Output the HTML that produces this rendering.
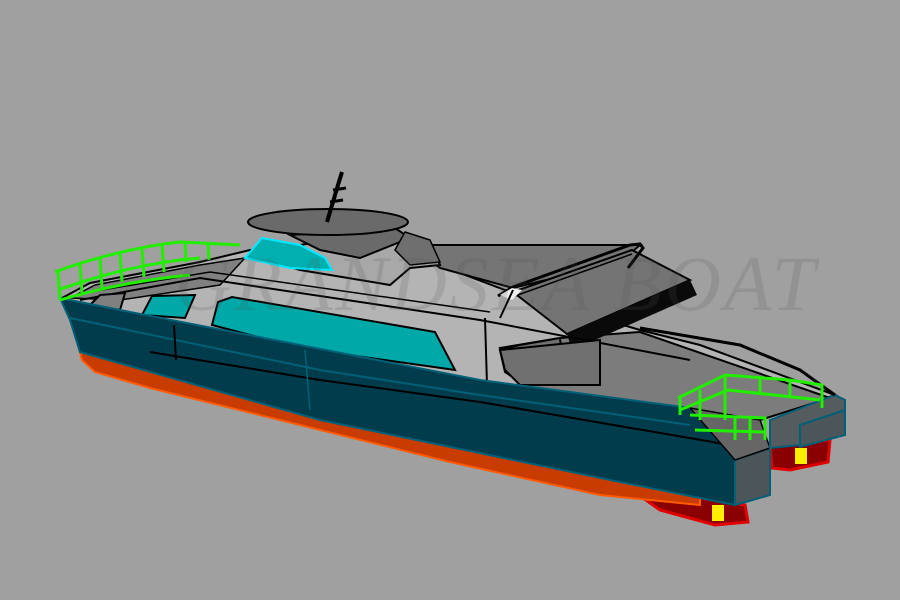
<!DOCTYPE html>
<html><head><style>
html,body{margin:0;padding:0;background:#a0a0a0;width:900px;height:600px;overflow:hidden}
svg{display:block}
</style></head><body>
<svg width="900" height="600" viewBox="0 0 900 600" xmlns="http://www.w3.org/2000/svg">
<rect width="900" height="600" fill="#a0a0a0"/>
<polygon points="615,478 700,498 745,505 748,522 715,525 660,510" fill="#8a0000" stroke="#e00000" stroke-width="3"/>
<polygon points="770,445 830,440 828,462 790,470 772,468" fill="#8a0000" stroke="#e00000" stroke-width="3"/>
<polygon points="78,345 120,360 320,418 620,482 700,498 700,505 600,495 450,462 300,425 150,388 95,372 82,360" fill="#c83c00" stroke="#ff5a00" stroke-width="2"/>
<polygon points="62,298 90,283 200,262 250,250 420,258 505,290 640,330 700,345 835,395 760,420 690,408 480,383 300,350 62,300" fill="#b4b4b4" stroke="#000" stroke-width="2"/>
<polygon points="70,298 95,285 200,265 245,258 220,285 120,300" fill="#808080" stroke="#000" stroke-width="1.5"/>
<polygon points="500,348 560,338 640,332 830,398 760,420 690,410 600,400 520,385" fill="#7c7c7c" stroke="#000" stroke-width="2"/>
<polygon points="500,350 520,345 560,338 565,385 520,382 505,372" fill="#707070" stroke="#000" stroke-width="2"/>
<polygon points="410,245 640,245 620,262 513,288 440,268" fill="#757575" stroke="#000" stroke-width="2"/>
<polygon points="260,258 300,245 380,232 430,245 440,265 410,268 390,285 330,275 300,270" fill="#a8a8a8" stroke="#000" stroke-width="2"/>
<polygon points="290,235 395,228 410,238 360,258 320,250" fill="#6a6a6a" stroke="#000" stroke-width="2"/>
<polygon points="405,232 430,240 440,262 410,265 395,250" fill="#6f6f6f" stroke="#000" stroke-width="1.5"/>
<ellipse cx="328" cy="222" rx="80" ry="13" fill="#6a6a6a" stroke="#000" stroke-width="2"/>
<polyline points="327,222 338,185 342,172" stroke="#000" stroke-width="4" fill="none"/>
<line x1="333" y1="190" x2="346" y2="188" stroke="#000" stroke-width="3"/>
<line x1="330" y1="202" x2="343" y2="200" stroke="#000" stroke-width="3"/>
<polygon points="245,258 262,238 300,245 325,258 332,270 290,268" fill="#00b0b0" stroke="#00e8ff" stroke-width="2"/>
<!-- sunshade -->
<polygon points="513,292 632,250 690,280 567,334" fill="#747474" stroke="#000" stroke-width="2"/>
<polygon points="567,334 690,280 697,295 572,350" fill="#0a0a0a"/>
<polyline points="498,296 513,287 630,245 640,244 643,248 628,268" stroke="#000" stroke-width="3" fill="none"/>
<polyline points="515,296 632,254" stroke="#000" stroke-width="1.5" fill="none"/>
<polygon points="500,295 512,288 522,290 512,300" fill="#eeeeee"/>
<line x1="513" y1="290" x2="500" y2="318" stroke="#000" stroke-width="2"/>
<polyline points="80,300 200,278 480,320 690,360" stroke="#000" stroke-width="2" fill="none"/>
<polyline points="90,292 210,272 490,312" stroke="#000" stroke-width="1.5" fill="none"/>
<line x1="485" y1="318" x2="487" y2="385" stroke="#000" stroke-width="2"/>
<polygon points="212,325 218,302 232,297 435,332 455,370 300,348" fill="#00a8a8" stroke="#000" stroke-width="2"/>
<polygon points="142,315 152,296 195,295 185,318" fill="#00a8a8" stroke="#000" stroke-width="2"/>
<polygon points="90,305 100,295 125,293 120,310" fill="#808080" stroke="#000" stroke-width="2"/>
<polygon points="500,350 600,340 600,385 520,385 505,370" fill="#707070" stroke="#000" stroke-width="2"/>
<polygon points="60,298 120,310 300,345 480,380 690,408 735,460 735,505 620,482 320,420 80,352 70,320" fill="#003c4c" stroke="#006078" stroke-width="2"/>
<polyline points="70,318 320,370 480,395 690,425" stroke="#006078" stroke-width="2" fill="none"/>
<polyline points="150,352 320,380 480,402 730,445" stroke="#000" stroke-width="2" fill="none"/>
<line x1="174" y1="325" x2="176" y2="360" stroke="#000" stroke-width="2"/>
<line x1="305" y1="350" x2="310" y2="410" stroke="#006078" stroke-width="1.5"/>
<polygon points="735,460 770,448 770,495 735,505" fill="#4c5559" stroke="#006078" stroke-width="2"/>
<polygon points="690,408 760,420 770,448 735,460" fill="#666" stroke="#000" stroke-width="1.5"/>
<polygon points="770,420 835,395 845,400 845,420 800,445 770,448" fill="#555c60" stroke="#006078" stroke-width="2"/>
<polygon points="800,425 845,410 845,435 800,447" fill="#4c5559" stroke="#006078" stroke-width="2"/>
<polyline points="640,328 740,345 800,370 835,395" stroke="#000" stroke-width="3" fill="none"/>
<g stroke="#22ee00" stroke-width="3" fill="none">
<path d="M55,272 C100,255 150,245 180,242 L240,245"/>
<path d="M58,290 C100,275 150,262 200,258"/>
<path d="M60,300 C100,288 140,280 190,275"/>
<line x1="58" y1="272" x2="60" y2="300"/><line x1="80" y1="264" x2="82" y2="293"/><line x1="100" y1="258" x2="102" y2="288"/>
<line x1="120" y1="252" x2="122" y2="282"/><line x1="142" y1="248" x2="144" y2="277"/><line x1="162" y1="244" x2="164" y2="272"/>
<line x1="185" y1="242" x2="186" y2="262"/><line x1="208" y1="242" x2="209" y2="260"/>
<path d="M678,398 L725,375 L790,380 L822,385 L822,408"/>
<path d="M680,410 L728,390 L820,400"/>
<path d="M690,415 L765,418 L765,440"/>
<path d="M695,430 L765,432"/>
<path d="M680,398 L680,415"/><line x1="700" y1="390" x2="700" y2="420"/><line x1="725" y1="375" x2="725" y2="420"/>
<line x1="760" y1="378" x2="760" y2="395"/><line x1="790" y1="380" x2="790" y2="398"/>
<line x1="735" y1="418" x2="735" y2="440"/><line x1="750" y1="418" x2="750" y2="440"/>
</g>
<rect x="712" y="505" width="12" height="16" fill="#ffee00"/>
<rect x="795" y="448" width="12" height="16" fill="#ffee00"/>
<text x="175" y="310" font-family="Liberation Serif, serif" font-style="italic" font-size="78" fill="#555" fill-opacity="0.18" textLength="640">GRANDSEA BOAT</text>
</svg>
</body></html>
